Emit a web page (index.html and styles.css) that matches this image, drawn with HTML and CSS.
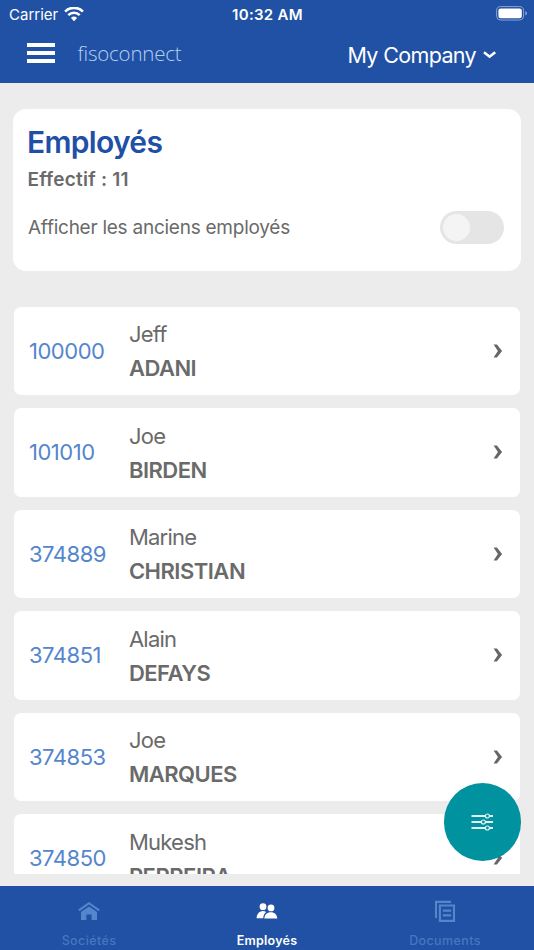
FILE: index.html
```html
<!DOCTYPE html>
<html lang="fr">
<head>
    <meta charset="UTF-8">
    <meta name="viewport" content="width=device-width, initial-scale=1.0">
    <title>Employés</title>
    <link rel="stylesheet" href="styles.css">
</head>
<body>
    <header class="header">
        <div class="status-bar">
            <div class="status-left">
                <span class="carrier">Carrier</span>
                <svg class="wifi" width="20" height="15" viewBox="0 0 20 15">
                    <g fill="none" stroke="#fff" stroke-width="2.7">
                        <path d="M1.1 4.6a12.6 12.6 0 0 1 17.8 0"/>
                        <path d="M4.3 8.1a8.1 8.1 0 0 1 11.4 0"/>
                    </g>
                    <path d="M6.9 10.9a4.5 4.5 0 0 1 6.2 0L10 14.2z" fill="#fff"/>
                </svg>
            </div>
            <span class="clock">10:32 AM</span>
            <svg class="battery" width="32" height="16" viewBox="0 0 32 16">
                <rect x=".6" y=".6" width="27" height="13.4" rx="4" fill="none" stroke="#8ba5d3"/>
                <rect x="2.4" y="2.4" width="23.4" height="9.8" rx="2.2" fill="#fff"/>
                <path d="M29.3 5.1c2.3.8 2.3 3.7 0 4.5z" fill="#8ba5d3"/>
            </svg>
        </div>
        <nav class="navbar">
            <div class="burger">
                <span></span>
                <span></span>
                <span></span>
            </div>
            <span class="logo">fisoconnect</span>
            <div class="company">
                <span class="company-name">My Company</span>
                <svg width="14" height="10" viewBox="0 0 14 10">
                    <path d="M1 2.2L6.6 6.7L12.2 2.2" fill="none" stroke="#fff" stroke-width="2.6"/>
                </svg>
            </div>
        </nav>
    </header>

    <main class="content">
        <section class="summary">
            <h1>Employés</h1>
            <p class="count">Effectif : 11</p>
            <div class="filter">
                <span class="filter-label">Afficher les anciens employés</span>
                <span class="switch"></span>
            </div>
        </section>

        <ul class="list">
            <li class="employee">
                <span class="number">100000</span>
                <div class="name"><span>Jeff</span><strong>ADANI</strong></div>
                <svg class="chevron" width="10" height="14" viewBox="0 0 10 14"><path d="M.6.4H3.9L9.1 7L3.9 13.6H.6L4.9 7z"/></svg>
            </li>
            <li class="employee">
                <span class="number">101010</span>
                <div class="name"><span>Joe</span><strong>BIRDEN</strong></div>
                <svg class="chevron" width="10" height="14" viewBox="0 0 10 14"><path d="M.6.4H3.9L9.1 7L3.9 13.6H.6L4.9 7z"/></svg>
            </li>
            <li class="employee">
                <span class="number">374889</span>
                <div class="name"><span>Marine</span><strong>CHRISTIAN</strong></div>
                <svg class="chevron" width="10" height="14" viewBox="0 0 10 14"><path d="M.6.4H3.9L9.1 7L3.9 13.6H.6L4.9 7z"/></svg>
            </li>
            <li class="employee">
                <span class="number">374851</span>
                <div class="name"><span>Alain</span><strong>DEFAYS</strong></div>
                <svg class="chevron" width="10" height="14" viewBox="0 0 10 14"><path d="M.6.4H3.9L9.1 7L3.9 13.6H.6L4.9 7z"/></svg>
            </li>
            <li class="employee">
                <span class="number">374853</span>
                <div class="name"><span>Joe</span><strong>MARQUES</strong></div>
                <svg class="chevron" width="10" height="14" viewBox="0 0 10 14"><path d="M.6.4H3.9L9.1 7L3.9 13.6H.6L4.9 7z"/></svg>
            </li>
            <li class="employee">
                <span class="number">374850</span>
                <div class="name"><span>Mukesh</span><strong>PERREIRA</strong></div>
                <svg class="chevron" width="10" height="14" viewBox="0 0 10 14"><path d="M.6.4H3.9L9.1 7L3.9 13.6H.6L4.9 7z"/></svg>
            </li>
        </ul>
    </main>

    <!-- Floating filter button -->
    <div class="fab">
        <svg width="22" height="18" viewBox="0 0 22 18">
            <path d="M.5 3H22M.5 9H22M.5 15H22" stroke="#e4f4f5" stroke-width="1.9"/>
            <g fill="#00929f" stroke="#e4f4f5" stroke-width="1.2">
                <circle cx="16.4" cy="3" r="2"/>
                <circle cx="12.4" cy="9" r="2"/>
                <circle cx="16.4" cy="15" r="2"/>
            </g>
        </svg>
    </div>

    <footer class="tabs">
        <div class="tab">
            <svg width="22" height="22" viewBox="0 0 22 22">
                <g transform="translate(0 1)">
                    <path d="M.8 9.4L11 2.3L21.2 9.4" fill="none" stroke="currentColor" stroke-width="2"/>
                    <path d="M11 5.4L19 11V19H13.6V13.4H8.4V19H3V11z" fill="currentColor"/>
                </g>
            </svg>
            <span>Sociétés</span>
        </div>
        <div class="tab active">
            <svg width="22" height="22" viewBox="0 0 22 22">
                <g fill="currentColor" transform="translate(0 1)">
                    <circle cx="7" cy="5.7" r="3.4"/>
                    <path d="M.6 17.3C.8 13.2 3 10.3 6.8 10.1C8.2 10.1 9.2 10.4 10.1 11C8.2 12.5 7.4 14.6 7.2 17.3z"/>
                    <circle cx="15" cy="6.9" r="3.4"/>
                    <path d="M8.3 17.6C8.6 13.6 10.8 11.2 14.8 11.2S21 13.6 21.3 17.6z"/>
                </g>
            </svg>
            <span>Employés</span>
        </div>
        <div class="tab">
            <svg width="22" height="22" viewBox="0 0 22 22">
                <g fill="none" stroke="currentColor" stroke-width="2.1">
                    <path d="M2 18V1.9H17"/>
                    <path d="M5.9 5.5H20V20.9H5.9z"/>
                    <path d="M8.8 10.6H17.2M8.8 15.4H17.2"/>
                </g>
            </svg>
            <span>Documents</span>
        </div>
    </footer>
</body>
</html>
```
FILE: styles.css
```css
* {
    margin: 0;
    padding: 0;
    box-sizing: border-box;
}

body {
    height: 950px;
    display: flex;
    flex-direction: column;
    overflow: hidden;
    background: #ececec;
    color: #6a6a6a;
    font-family: Inter, "Liberation Sans", sans-serif;
}

svg {
    display: block;
}

.header {
    flex: none;
    height: 83px;
    background: #2151a4;
    color: #fff;
}

.status-bar {
    height: 28px;
    display: grid;
    grid-template-columns: 1fr auto 1fr;
    align-items: center;
    padding: 0 6px 0 9px;
    font-size: 15px;
}

.status-left {
    display: flex;
    align-items: center;
    gap: 6px;
}

.clock {
    margin-left: -2px;
    font-weight: 600;
    letter-spacing: 0.3px;
}

.battery {
    justify-self: end;
}

.navbar {
    height: 49px;
    display: flex;
    align-items: center;
    padding: 0 37px 0 27px;
}

.burger {
    width: 28px;
    display: flex;
    flex-direction: column;
    gap: 4px;
}

.burger span {
    height: 4px;
    background: #fff;
}

.logo {
    margin-left: 22.5px;
    font-family: "Open Sans", sans-serif;
    font-size: 20.5px;
    font-weight: 300;
    letter-spacing: -0.2px;
    color: #b4cff2;
}

.company {
    display: flex;
    align-items: center;
    gap: 7px;
    margin-left: auto;
    padding-top: 5px;
}

.company-name {
    font-size: 21.5px;
    letter-spacing: -0.65px;
}

.content {
    flex: none;
    height: 791px;
    overflow: hidden;
    padding: 25.5px 13px 0;
}

.summary {
    height: 162px;
    padding: 13px 17px 0 15px;
    background: #fff;
    border-radius: 13px;
}

.summary h1 {
    margin-left: -1px;
    font-size: 30px;
    line-height: 40px;
    font-weight: 600;
    letter-spacing: -0.7px;
    color: #1f4fa6;
}

.count {
    margin-left: -0.5px;
    font-size: 19px;
    line-height: 36px;
    font-weight: 600;
    letter-spacing: 0.25px;
}

.filter {
    display: flex;
    align-items: center;
    justify-content: space-between;
    margin-top: 13px;
}

.filter-label {
    font-size: 19px;
    letter-spacing: -0.25px;
}

.switch {
    width: 64.5px;
    height: 33px;
    padding: 3px;
    border-radius: 17px;
    background: #e5e5e5;
}

.switch::before {
    content: "";
    display: block;
    width: 27px;
    height: 27px;
    border-radius: 50%;
    background: #f4f4f4;
}

.list {
    display: flex;
    flex-direction: column;
    gap: 13px;
    margin-top: 36px;
    padding: 0 1px 0 1.4px;
    list-style: none;
}

.employee {
    height: 88.5px;
    display: grid;
    grid-template-columns: 100px 1fr 10px;
    align-items: center;
    padding: 0 17px 0 14.5px;
    background: #fff;
    border-radius: 7px;
    font-size: 22px;
}

.number {
    letter-spacing: -0.45px;
    color: #5586cc;
}

.name {
    display: flex;
    flex-direction: column;
    padding-top: 0.6px;
    line-height: 34px;
    letter-spacing: -0.75px;
}

.name strong {
    font-weight: 600;
    letter-spacing: -0.5px;
}

.chevron {
    fill: #666;
}

.fab {
    position: absolute;
    left: 443.5px;
    top: 783px;
    width: 77.5px;
    height: 77.5px;
    display: flex;
    align-items: center;
    justify-content: center;
    border-radius: 50%;
    background: #00929f;
}

.tabs {
    flex: none;
    height: 64px;
    margin-top: 12px;
    display: grid;
    grid-template-columns: repeat(3, 1fr);
    background: #2151a4;
}

.tab {
    display: flex;
    flex-direction: column;
    align-items: center;
    padding-top: 14px;
    font-size: 12.5px;
    font-weight: 500;
    letter-spacing: 0.4px;
    color: #5586cc;
}

.tab span {
    margin-top: 11px;
    line-height: 16px;
    color: #4676bf;
}

.tab.active {
    font-weight: 600;
    letter-spacing: 0.25px;
}

.tab.active,
.tab.active span {
    color: #fff;
}
```
